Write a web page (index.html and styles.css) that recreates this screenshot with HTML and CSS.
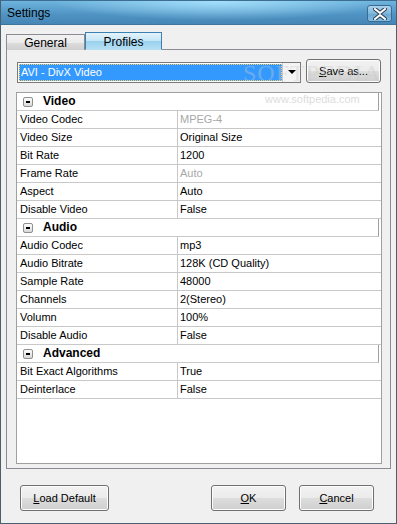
FILE: index.html
```html
<!DOCTYPE html>
<html lang="en">
<head>
  <meta charset="UTF-8" />
  <title>Settings</title>
  <link rel="stylesheet" href="styles.css">
</head>
<body>
  <div class="Window">
    <div class="TitleBar">
      <span class="Title">Settings</span>
      <button class="Close">
        <svg width="14" height="12" viewBox="0 0 14 12">
          <path d="M2 1 L7 5 L12 1 M2 11 L7 7 L12 11" fill="none" stroke="#2b3f52" stroke-width="4" stroke-linecap="square"/>
          <path d="M2 1 L7 5 L12 1 M2 11 L7 7 L12 11" fill="none" stroke="#fff" stroke-width="2" stroke-linecap="square"/>
        </svg>
      </button>
    </div>

    <div class="Client">
      <div class="Tabs">
        <div class="tab">General</div>
        <div class="tab active">Profiles</div>
      </div>

      <div class="Panel">
        <div class="Toolbar">
          <div class="combo">
            <span class="combo-text">AVI - DivX Video</span>
            <span class="combo-arrow"></span>
          </div>
          <button class="button save"><u>S</u>ave as...</button>
        </div>

        <div class="Grid">
          <div class="row category"><span class="toggle"></span>Video</div>
          <div class="row"><span class="key">Video Codec</span><span class="val muted">MPEG-4</span></div>
          <div class="row"><span class="key">Video Size</span><span class="val">Original Size</span></div>
          <div class="row"><span class="key">Bit Rate</span><span class="val">1200</span></div>
          <div class="row"><span class="key">Frame Rate</span><span class="val muted">Auto</span></div>
          <div class="row"><span class="key">Aspect</span><span class="val">Auto</span></div>
          <div class="row"><span class="key">Disable Video</span><span class="val">False</span></div>

          <div class="row category"><span class="toggle"></span>Audio</div>
          <div class="row"><span class="key">Audio Codec</span><span class="val">mp3</span></div>
          <div class="row"><span class="key">Audio Bitrate</span><span class="val">128K (CD Quality)</span></div>
          <div class="row"><span class="key">Sample Rate</span><span class="val">48000</span></div>
          <div class="row"><span class="key">Channels</span><span class="val">2(Stereo)</span></div>
          <div class="row"><span class="key">Volumn</span><span class="val">100%</span></div>
          <div class="row"><span class="key">Disable Audio</span><span class="val">False</span></div>

          <div class="row category"><span class="toggle"></span>Advanced</div>
          <div class="row"><span class="key">Bit Exact Algorithms</span><span class="val">True</span></div>
          <div class="row"><span class="key">Deinterlace</span><span class="val">False</span></div>
        </div>

        <div class="mark big">SOFTPEDIA</div>
        <div class="mark small">www.softpedia.com</div>
      </div>

      <div class="Footer">
        <button class="button load"><u>L</u>oad Default</button>
        <span class="spacer"></span>
        <button class="button ok"><u>O</u>K</button>
        <button class="button cancel"><u>C</u>ancel</button>
      </div>
    </div>
  </div>
</body>
</html>
```

FILE: styles.css
```css
* {
  margin: 0;
  padding: 0;
  box-sizing: border-box;
}

html, body {
  width: 397px;
  height: 524px;
  overflow: hidden;
  font-family: "Liberation Sans", Arial, sans-serif;
  font-size: 11px;
  color: #000;
  background: #f0f0f0;
}

.Window {
  width: 397px;
  height: 524px;
  display: flex;
  flex-direction: column;
  border: 1px solid #4b5f6e;
  border-top-color: #3d6e92;
  background: #f0f0f0;
}

.TitleBar {
  height: 24px;
  flex-shrink: 0;
  display: flex;
  align-items: center;
  justify-content: space-between;
  padding: 0 4px 0 6px;
  background:
    radial-gradient(ellipse 60% 120% at 55% 0%, rgba(170, 228, 255, 0.9), rgba(170, 228, 255, 0) 70%),
    linear-gradient(#6eb4de, #4f93c3 60%, #4686b6);
  border-bottom: 1px solid #3f769d;
}

.Title {
  font-size: 12px;
  color: #000;
}

.Close {
  width: 25px;
  height: 17px;
  border: 1px solid #3a6c92;
  border-radius: 3px;
  background: linear-gradient(#a9d2ec, #7fb6dc 50%, #6aa6d1 51%, #84bde2);
  display: flex;
  align-items: center;
  justify-content: center;
  margin-top: 2px;
}

.Client {
  flex: 1;
  display: flex;
  flex-direction: column;
  padding: 8px 22px 0 5px;
}

.Tabs {
  display: flex;
  align-items: flex-end;
  height: 17px;
  position: relative;
  z-index: 1;
  margin-bottom: -1px;
}

.tab {
  width: 79px;
  height: 16px;
  text-align: center;
  font-size: 12px;
  line-height: 16px;
  border: 1px solid #898c95;
  border-bottom: none;
  background: linear-gradient(#f2f2f2, #ebebeb 50%, #dddddd 51%, #cfcfcf);
}

.tab.active {
  width: 77px;
  height: 18px;
  line-height: 18px;
  border-color: #3c7fb1;
  background: linear-gradient(#e5f4fc, #c4e5f6 50%, #98d1ef 51%, #b5def3);
  border-bottom: 1px solid #b5def3;
}

.Panel {
  position: relative;
  width: 385px;
  height: 420px;
  border: 1px solid #898c95;
  padding: 10px 8px 0 9px;
}

.Toolbar {
  display: flex;
  align-items: flex-end;
  justify-content: space-between;
  height: 23px;
}

.combo {
  display: flex;
  width: 284px;
  height: 21px;
  margin-left: 1px;
  border: 1px solid #7a7a7a;
  background: #fff;
  padding: 1px;
}

.combo-text {
  flex: 1;
  color: #fff;
  background: #3399ff;
  border: 1px dotted #ffcf60;
  font-size: 11px;
  line-height: 15px;
  padding-left: 1px;
}

.combo-arrow {
  width: 18px;
  border-left: 1px solid #c7c7c7;
  background: #f4f4f4;
  position: relative;
  margin: -1px -1px -1px 0;
}

.combo-arrow::after {
  content: "";
  position: absolute;
  left: 5px;
  top: 7px;
  border-left: 4px solid transparent;
  border-right: 4px solid transparent;
  border-top: 4px solid #000;
}

.button {
  font-family: "Liberation Sans", Arial, sans-serif;
  font-size: 11px;
  color: #000;
  border: 1px solid #707070;
  border-radius: 3px;
  background: linear-gradient(#f2f2f2, #ebebeb 50%, #dddddd 51%, #cfcfcf);
  box-shadow: inset 0 0 0 1px #fcfcfc;
}

.button u {
  text-decoration: underline;
}

.save {
  width: 75px;
  height: 24px;
  margin-right: 1px;
}

.Grid {
  margin-top: 9px;
  height: 372px;
  border: 1px solid #a0a0a0;
  background: #fff;
}

.row {
  display: flex;
  height: 18px;
  line-height: 17px;
  border-bottom: 1px solid #c8c8c8;
  font-size: 11px;
}

.key {
  width: 161px;
  padding-left: 3px;
  border-right: 1px solid #c8c8c8;
  white-space: nowrap;
}

.val {
  padding-left: 2px;
}

.muted {
  color: #a8a8a8;
}

.row.category {
  font-weight: bold;
  font-size: 12px;
  align-items: center;
  padding-left: 6px;
  margin-right: 2px;
  border-right: 1px solid #a0a0a0;
}

.toggle {
  width: 10px;
  height: 10px;
  margin-right: 10px;
  border: 1px solid #8e8f8f;
  border-radius: 2px;
  background: linear-gradient(#fdfdfd, #d8d8d8);
  position: relative;
}

.toggle::after {
  content: "";
  position: absolute;
  left: 2px;
  top: 3px;
  width: 4px;
  height: 2px;
  background: #000;
}

.mark {
  position: absolute;
  pointer-events: none;
}

.mark.big {
  left: 236px;
  top: 10px;
  font-family: "Liberation Serif", serif;
  font-size: 24px;
  letter-spacing: 1px;
  color: rgba(200, 200, 200, 0.4);
}

.mark.small {
  left: 258px;
  top: 43px;
  font-size: 11px;
  color: #dddddd;
}

.Footer {
  display: flex;
  align-items: flex-start;
  padding: 16px 0 0 14px;
}

.Footer .button {
  height: 26px;
}

.load {
  width: 89px;
}

.spacer {
  flex: 1;
}

.ok {
  width: 75px;
  margin-right: 13px;
}

.cancel {
  width: 75px;
}
```
